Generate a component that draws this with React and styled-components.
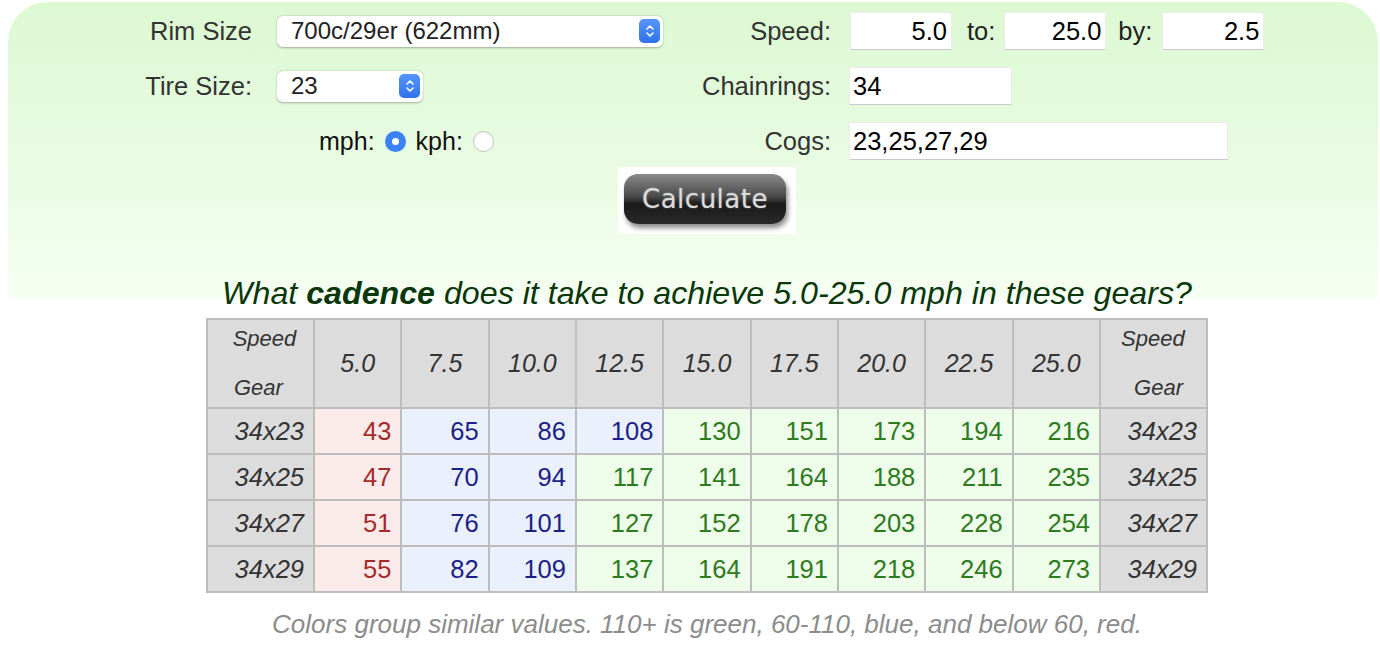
import React from 'react'
import styled, { createGlobalStyle } from 'styled-components'

const GlobalStyle = createGlobalStyle`
  body {
    margin: 0;
    background: #fff;
    font-family: "Liberation Sans", Arial, sans-serif;
  }
`

const Page = styled.div`
  width: 1380px;
  padding-top: 2px;
`

const Panel = styled.div`
  margin: 0 2px 0 8px;
  height: 296px;
  border-radius: 40px 40px 0 0;
  background: linear-gradient(to bottom, #dcf9d2 0%, #e6fbdf 45%, #f5fff2 100%);
  box-sizing: border-box;
  padding-top: 10px;
`

const Form = styled.div`
  display: grid;
  grid-template-columns: 269px 404px 168px 1fr;
  grid-auto-rows: 38px;
  row-gap: 17px;
  align-items: center;
`

const Label = styled.div`
  text-align: right;
  font-size: 25.5px;
  color: #333;
  padding-right: ${p => p.$pad}px;
`

const Cell = styled.div`
  display: flex;
  align-items: center;
  padding-left: ${p => p.$pad || 0}px;
  height: 100%;
`

const SelectBox = styled.div`
  width: ${p => p.$w}px;
  height: 31px;
  box-sizing: border-box;
  background: #fff;
  border-radius: 6px;
  box-shadow: 0 0.5px 2px rgba(0, 0, 0, 0.3);
  display: flex;
  align-items: center;
  justify-content: space-between;
  padding: 0 3px 0 14px;
  font-size: 24px;
  color: #222;
`

const Stepper = styled.span`
  width: 21px;
  height: 24px;
  border-radius: 5px;
  background: linear-gradient(#5596fa, #2f72ec);
  display: flex;
  align-items: center;
  justify-content: center;
`

const TextInput = styled.div`
  width: ${p => p.$w}px;
  height: 38px;
  box-sizing: border-box;
  background: #fff;
  border: 1px solid #ececec;
  border-bottom-color: #c9c9c9;
  display: flex;
  align-items: center;
  justify-content: ${p => (p.$right ? 'flex-end' : 'flex-start')};
  padding: 0 4px 0 3px;
  font-size: 25.5px;
  color: #000;
`

const Inline = styled.span`
  font-size: 25.5px;
  color: #222;
  margin: 0 ${p => p.$r}px 0 ${p => p.$l}px;
`

const Units = styled.div`
  display: flex;
  align-items: center;
  font-size: 25px;
  color: #111;
  gap: 10px;
`

const Radio = styled.span`
  width: 21px;
  height: 21px;
  border-radius: 50%;
  box-sizing: border-box;
  display: inline-block;
  background: ${p => (p.$checked ? '#3b82f6' : '#fff')};
  border: ${p => (p.$checked ? 'none' : '1px solid #c4c4c4')};
  box-shadow: ${p => (p.$checked ? 'none' : 'inset 0 1px 1px rgba(0,0,0,0.08)')};
  position: relative;
  &::after {
    content: '';
    display: ${p => (p.$checked ? 'block' : 'none')};
    position: absolute;
    left: 7px;
    top: 7px;
    width: 7px;
    height: 7px;
    border-radius: 50%;
    background: #fff;
  }
`

const ButtonRow = styled.div`
  display: flex;
  justify-content: center;
  padding-left: 28px;
  margin-top: 7px;
`

const ButtonFrame = styled.div`
  width: 178px;
  height: 67px;
  background: #fff;
  display: flex;
  align-items: center;
  justify-content: center;
`

const CalcButton = styled.button`
  width: 162px;
  height: 50px;
  margin: -4px 4px 0 0;
  border: none;
  border-radius: 14px;
  background: linear-gradient(#8a8a8a 0%, #4a4a4a 45%, #1a1a1a 60%, #2a2a2a 100%);
  box-shadow: 2px 4px 5px rgba(0, 0, 0, 0.45);
  color: #dcdcdc;
  font-family: "DejaVu Sans", sans-serif;
  font-size: 26px;
  letter-spacing: 0.5px;
  text-shadow: 0 0 2px rgba(255, 255, 255, 0.4);
`

const Content = styled.div`
  padding-left: 34px;
  display: flex;
  flex-direction: column;
  align-items: center;
`

const Heading = styled.h2`
  margin: -24px 0 6px 0;
  font-size: 32.2px;
  line-height: 38px;
  font-style: italic;
  font-weight: normal;
  color: #0a370a;
`

const Table = styled.table`
  border-collapse: collapse;
  width: 1002px;
  table-layout: fixed;
`

const Th = styled.th`
  border: 2px solid #bdbdbd;
  background: #dcdcdc;
  font-style: italic;
  font-weight: normal;
  font-size: 25px;
  color: #333;
  height: 87px;
  padding: 0;
`

const CornerText = styled.div`
  font-size: 22px;
  line-height: 24px;
  text-align: ${p => p.$align};
  padding: 0 ${p => p.$pr || 0}px 0 ${p => p.$pl || 0}px;
`

const CornerStack = styled.div`
  display: flex;
  flex-direction: column;
  gap: 25px;
`

const Td = styled.td`
  border: 2px solid #bdbdbd;
  height: 44px;
  padding: 0 9px 0 0;
  text-align: right;
  font-size: 25.5px;
  background: ${p => p.$bg};
  color: ${p => p.$fg};
  font-style: ${p => (p.$gear ? 'italic' : 'normal')};
`

const Note = styled.p`
  margin: 16px 0 0 0;
  font-size: 26px;
  font-style: italic;
  color: #8c8c8c;
`

const speeds = ['5.0', '7.5', '10.0', '12.5', '15.0', '17.5', '20.0', '22.5', '25.0']

const rows = [
  { gear: '34x23', values: [43, 65, 86, 108, 130, 151, 173, 194, 216] },
  { gear: '34x25', values: [47, 70, 94, 117, 141, 164, 188, 211, 235] },
  { gear: '34x27', values: [51, 76, 101, 127, 152, 178, 203, 228, 254] },
  { gear: '34x29', values: [55, 82, 109, 137, 164, 191, 218, 246, 273] },
]

const tone = v => {
  if (v >= 110) return { bg: '#eefcea', fg: '#2e7a1f' }
  if (v >= 60) return { bg: '#eaf1fc', fg: '#1c1f86' }
  return { bg: '#fbeaea', fg: '#a52a2a' }
}

const StepIcon = () => (
  <svg width="10" height="16" viewBox="0 0 10 16">
    <path d="M2 6 L5 3 L8 6 M2 10 L5 13 L8 10" fill="none" stroke="#fff" strokeWidth="1.6" strokeLinecap="round" strokeLinejoin="round" />
  </svg>
)

const GearHead = ({ side }) => (
  <Th>
    <CornerStack>
      <CornerText $align={side === 'left' ? 'center' : 'left'} $pl={side === 'left' ? 8 : 20}>Speed</CornerText>
      <CornerText $align={side === 'left' ? 'left' : 'right'} $pl={side === 'left' ? 26 : 0} $pr={side === 'left' ? 0 : 23}>Gear</CornerText>
    </CornerStack>
  </Th>
)

const App = () => {
  return (
    <Page>
      <GlobalStyle />
      <Panel>
        <Form>
          <Label $pad={25}>Rim Size</Label>
          <Cell>
            <SelectBox $w={386}>
              700c/29er (622mm)
              <Stepper><StepIcon /></Stepper>
            </SelectBox>
          </Cell>
          <Label $pad={18}>Speed:</Label>
          <Cell $pad={1}>
            <TextInput $w={102} $right>5.0</TextInput>
            <Inline $l={15} $r={9}>to:</Inline>
            <TextInput $w={102} $right>25.0</TextInput>
            <Inline $l={12} $r={10}>by:</Inline>
            <TextInput $w={102} $right>2.5</TextInput>
          </Cell>

          <Label $pad={25}>Tire Size:</Label>
          <Cell>
            <SelectBox $w={146}>
              23
              <Stepper><StepIcon /></Stepper>
            </SelectBox>
          </Cell>
          <Label $pad={18}>Chainrings:</Label>
          <Cell>
            <TextInput $w={163}>34</TextInput>
          </Cell>

          <div />
          <Cell $pad={42}>
            <Units>
              mph: <Radio $checked />
              kph: <Radio />
            </Units>
          </Cell>
          <Label $pad={18}>Cogs:</Label>
          <Cell>
            <TextInput $w={379}>23,25,27,29</TextInput>
          </Cell>
        </Form>
        <ButtonRow>
          <ButtonFrame>
            <CalcButton>Calculate</CalcButton>
          </ButtonFrame>
        </ButtonRow>
      </Panel>
      <Content>
        <Heading>
          What <b>cadence</b> does it take to achieve 5.0-25.0 mph in these gears?
        </Heading>
        <Table>
          <colgroup>
            <col style={{ width: 107 }} />
            {speeds.map(s => <col key={s} />)}
            <col style={{ width: 107 }} />
          </colgroup>
          <thead>
            <tr>
              <GearHead side="left" />
              {speeds.map(s => <Th key={s}>{s}</Th>)}
              <GearHead side="right" />
            </tr>
          </thead>
          <tbody>
            {rows.map(r => (
              <tr key={r.gear}>
                <Td $gear $bg="#dcdcdc" $fg="#333">{r.gear}</Td>
                {r.values.map((v, i) => {
                  const t = tone(v)
                  return <Td key={i} $bg={t.bg} $fg={t.fg}>{v}</Td>
                })}
                <Td $gear $bg="#dcdcdc" $fg="#333">{r.gear}</Td>
              </tr>
            ))}
          </tbody>
        </Table>
        <Note>Colors group similar values. 110+ is green, 60-110, blue, and below 60, red.</Note>
      </Content>
    </Page>
  )
}

export default App
